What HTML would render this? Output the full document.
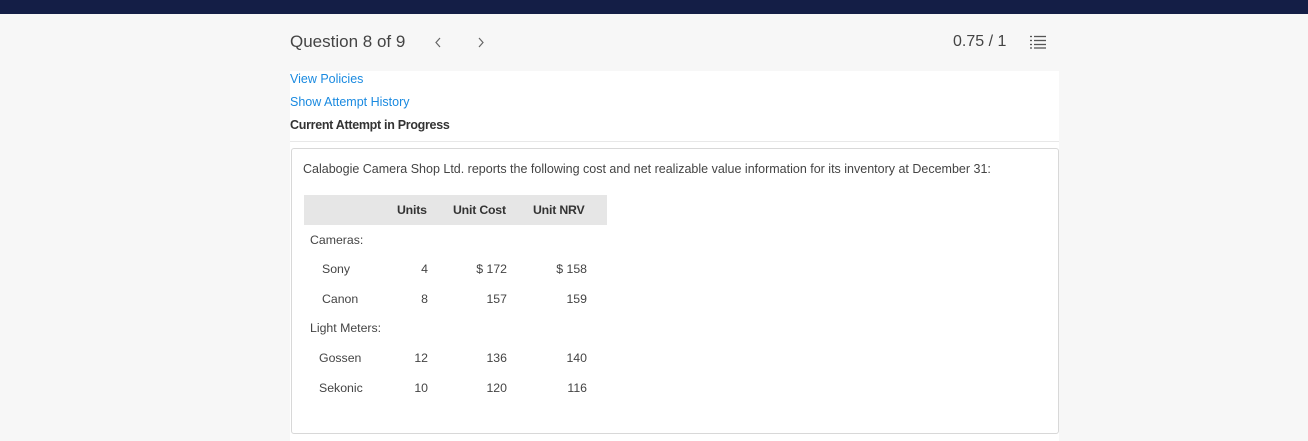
<!DOCTYPE html>
<html><head><style>
*{margin:0;padding:0;box-sizing:border-box}
body{width:1308px;height:441px;background:#f7f7f7;font-family:"Liberation Sans",sans-serif;position:relative;overflow:hidden;color:#333}
.a{position:absolute;white-space:nowrap}
.t{font-size:12.3px;color:#444}
.r{text-align:right;width:60px}
</style></head><body>
<div class="a" style="left:0;top:0;width:1308px;height:14px;background:#141e46"></div>
<div class="a" style="left:290px;top:32px;font-size:17px;color:#444">Question 8 of 9</div>
<svg class="a" style="left:434px;top:37px" width="8" height="11"><path d="M6 1 L2 5.5 L6 10" fill="none" stroke="#666" stroke-width="1.2"/></svg>
<svg class="a" style="left:477px;top:37px" width="8" height="11"><path d="M2 1 L6 5.5 L2 10" fill="none" stroke="#666" stroke-width="1.2"/></svg>
<div class="a" style="left:953px;top:33px;font-size:16px;color:#444">0.75 / 1</div>
<svg class="a" style="left:1030px;top:35px" width="18" height="14" viewBox="0 0 18 14"><g stroke="#555" stroke-width="1.3"><line x1="0" y1="1.5" x2="2" y2="1.5"/><line x1="0" y1="5.5" x2="2" y2="5.5"/><line x1="0" y1="9.5" x2="2" y2="9.5"/><line x1="0" y1="13" x2="2" y2="13"/><line x1="4" y1="1.5" x2="16" y2="1.5"/><line x1="4" y1="5.5" x2="16" y2="5.5"/><line x1="4" y1="9.5" x2="16" y2="9.5"/><line x1="4" y1="13" x2="16" y2="13"/></g></svg>
<div class="a" style="left:290px;top:71px;width:769px;height:370px;background:#fff"></div>
<div class="a" style="left:290px;top:72px;font-size:12.5px;color:#1a8ae0">View Policies</div>
<div class="a" style="left:290px;top:95px;font-size:12.5px;color:#1a8ae0">Show Attempt History</div>
<div class="a" style="left:290px;top:118px;font-size:12.5px;color:#333;font-weight:bold;letter-spacing:-0.3px">Current Attempt in Progress</div>
<div class="a" style="left:290px;top:141px;width:769px;height:1px;background:#e8e8e8"></div>
<div class="a" style="left:291px;top:148px;width:768px;height:286px;border:1px solid #d8d8d8;border-radius:3px"></div>
<div class="a t" style="left:303px;top:162px;font-size:12.5px">Calabogie Camera Shop Ltd. reports the following cost and net realizable value information for its inventory at December 31:</div>
<div class="a" style="left:304px;top:195px;width:303px;height:30px;background:#e6e6e6"></div>
<div class="a" style="left:397px;top:203px;font-size:12.3px;font-weight:bold;color:#333;letter-spacing:-0.2px">Units</div>
<div class="a" style="left:453px;top:203px;font-size:12.3px;font-weight:bold;color:#333;letter-spacing:-0.2px">Unit Cost</div>
<div class="a" style="left:533px;top:203px;font-size:12.3px;font-weight:bold;color:#333;letter-spacing:-0.2px">Unit NRV</div>
<div class="a t" style="left:310px;top:233px">Cameras:</div>
<div class="a t" style="left:322px;top:262px">Sony</div>
<div class="a t" style="left:322px;top:292px">Canon</div>
<div class="a t" style="left:310px;top:321px">Light Meters:</div>
<div class="a t" style="left:319px;top:351px">Gossen</div>
<div class="a t" style="left:319px;top:381px">Sekonic</div>
<div class="a t r" style="left:368px;top:262px">4</div>
<div class="a t r" style="left:368px;top:292px">8</div>
<div class="a t r" style="left:368px;top:351px">12</div>
<div class="a t r" style="left:368px;top:381px">10</div>
<div class="a t r" style="left:447px;top:262px">$ 172</div>
<div class="a t r" style="left:447px;top:292px">157</div>
<div class="a t r" style="left:447px;top:351px">136</div>
<div class="a t r" style="left:447px;top:381px">120</div>
<div class="a t r" style="left:527px;top:262px">$ 158</div>
<div class="a t r" style="left:527px;top:292px">159</div>
<div class="a t r" style="left:527px;top:351px">140</div>
<div class="a t r" style="left:527px;top:381px">116</div>
</body></html>
